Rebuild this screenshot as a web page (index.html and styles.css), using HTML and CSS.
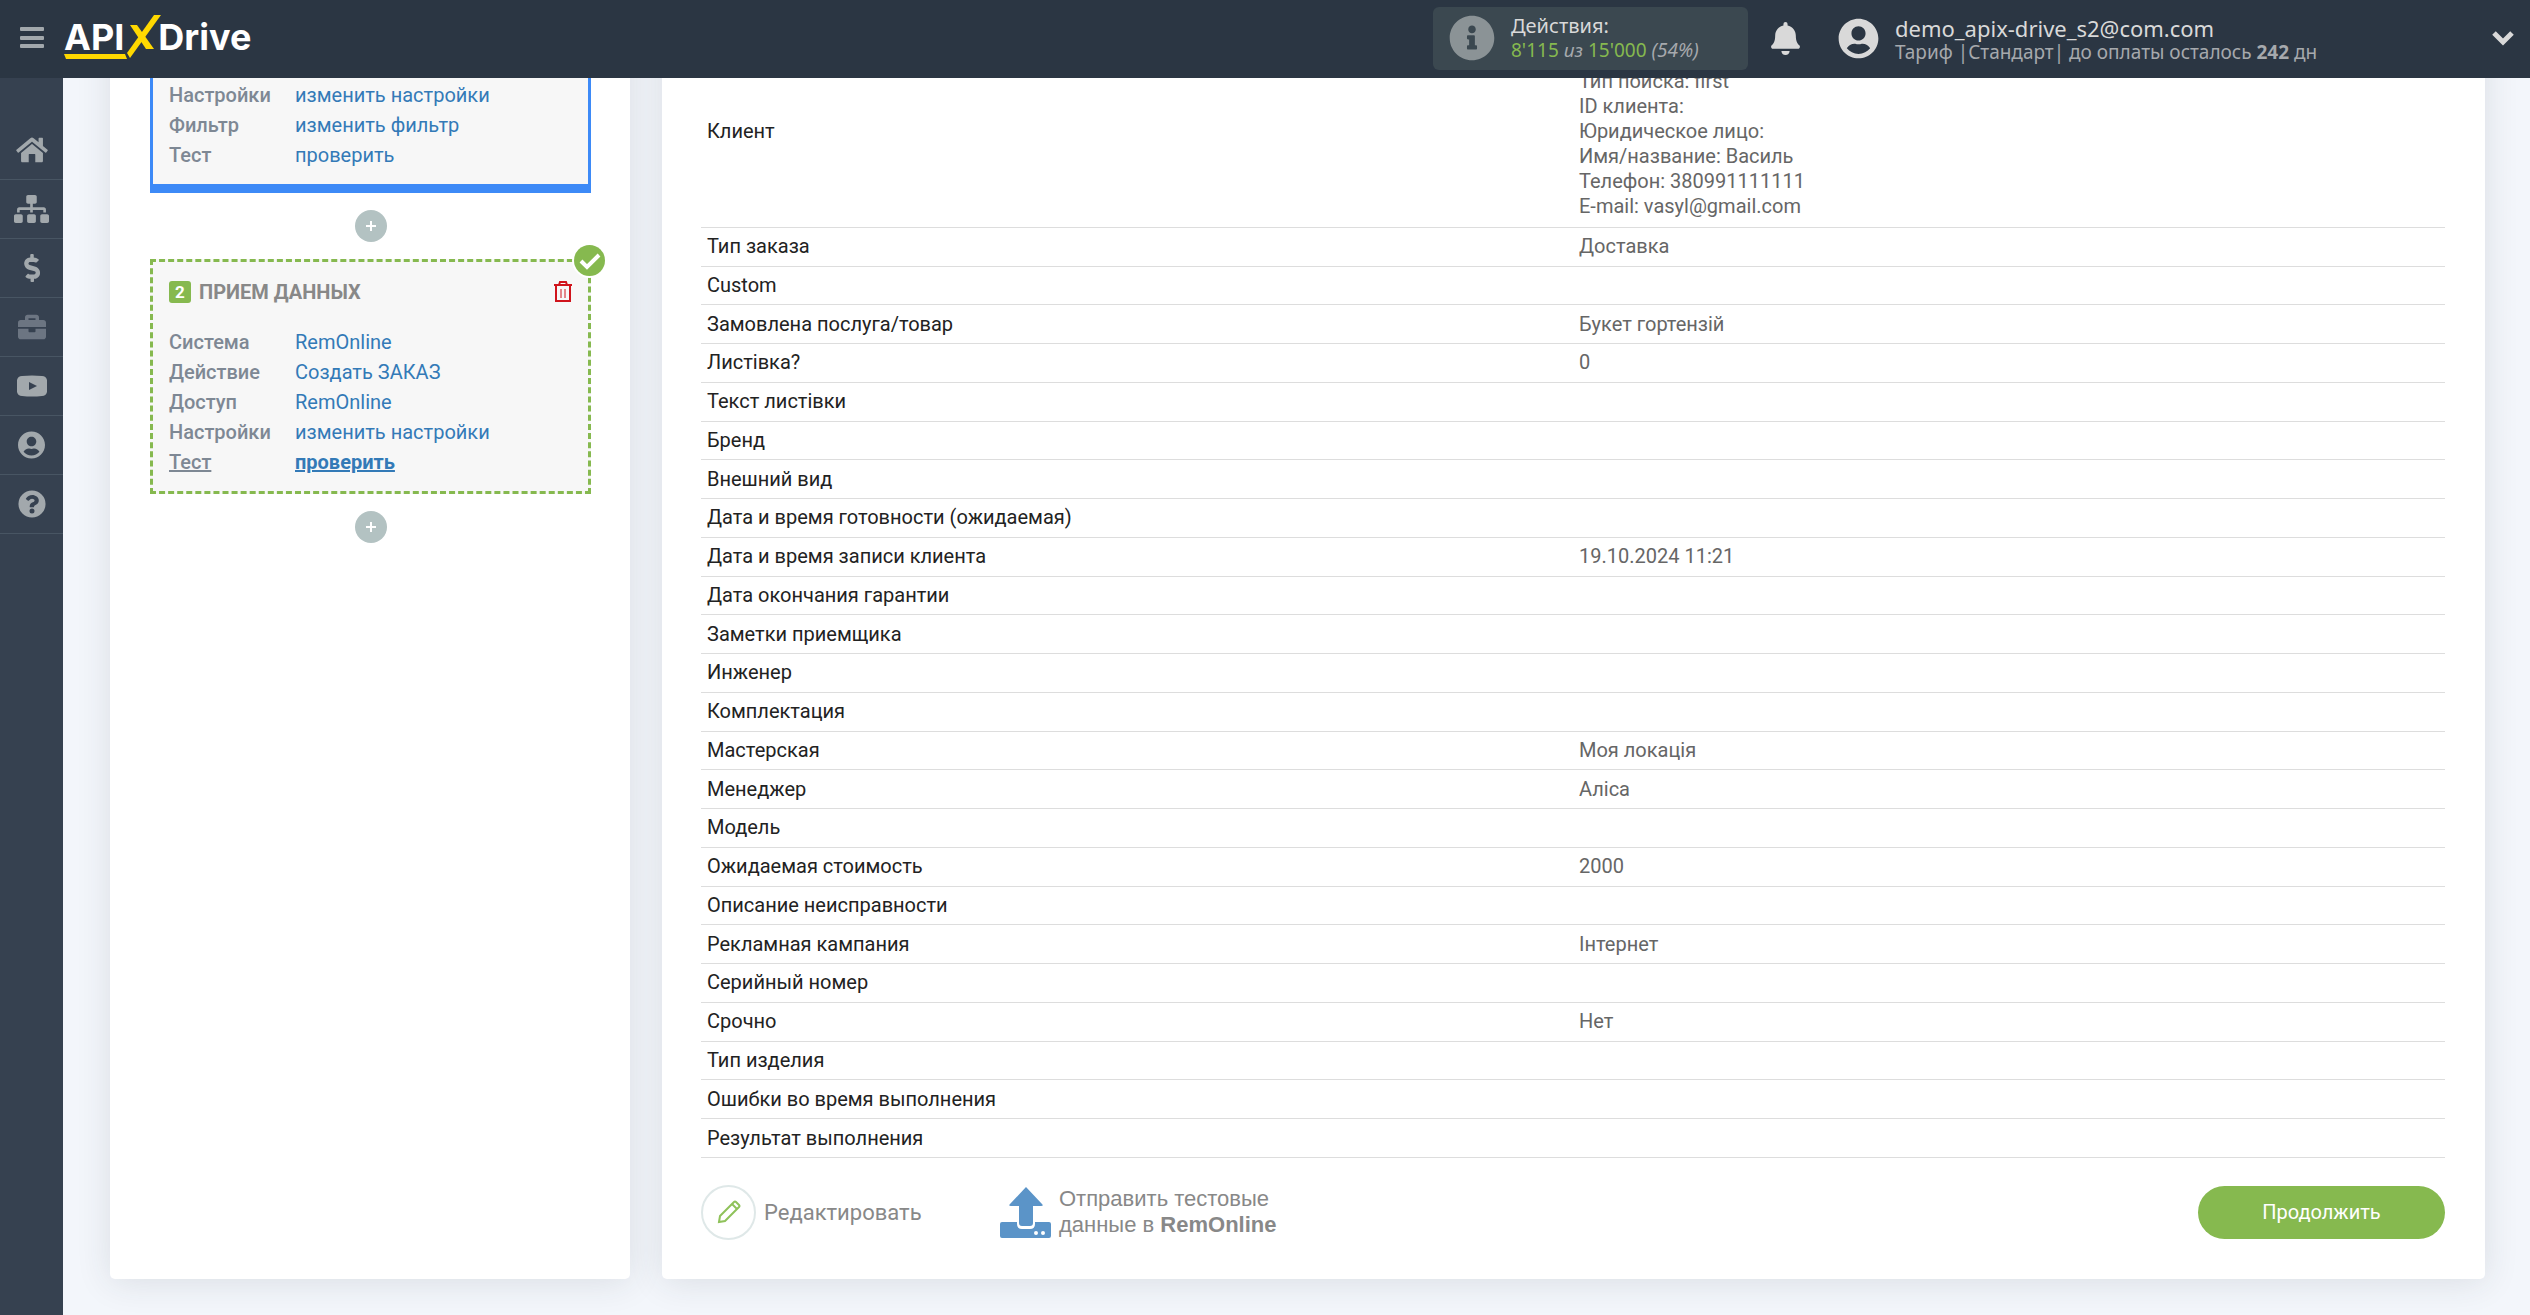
FILE: index.html
```
<!DOCTYPE html>
<html lang="ru">
<head>
<meta charset="utf-8">
<title>ApiX-Drive</title>
<link rel="stylesheet" href="styles.css">
</head>
<body>
<header class="topbar">
  <button class="icon-btn menu-btn" aria-label="Меню">
    <svg width="24" height="22" viewBox="0 0 24 22" fill="#a2a8ac"><rect width="24" height="4" rx="1"/><rect y="9" width="24" height="4" rx="1"/><rect y="17" width="24" height="4" rx="1"/></svg>
  </button>
  <a class="logo" href="#" aria-label="APIXDrive">
    <span class="logo-text">API</span>
    <svg class="logo-x" width="34" height="44" viewBox="0 0 34 44" fill="#ffd800"><path d="M27 0h7L3 43l-3-5z"/><path d="M3 10h7l17 24h-8z"/></svg>
    <span class="logo-text">Drive</span>
    <svg class="logo-line" width="64" height="5" viewBox="0 0 64 5"><path d="M0 0h61l2 5H2z" fill="#ffd800"/></svg>
  </a>
  <div class="usage">
    <svg width="46" height="46" viewBox="0 0 512 512" fill="#8b9396"><path d="M256 8C119 8 8 119 8 256s111 248 248 248 248-111 248-248S393 8 256 8zm0 110c23 0 42 19 42 42s-19 42-42 42-42-19-42-42 19-42 42-42zm56 254c0 7-5 12-12 12h-88c-7 0-12-5-12-12v-24c0-7 5-12 12-12h12v-64h-12c-7 0-12-5-12-12v-24c0-7 5-12 12-12h64c7 0 12 5 12 12v100h12c7 0 12 5 12 12z"/></svg>
    <div>
      <div class="usage-title">Действия:</div>
      <div class="usage-value"><span class="green">8'115</span> <i>из</i> <span class="green">15'000</span> <i>(54%)</i></div>
    </div>
  </div>
  <button class="icon-btn bell" aria-label="Уведомления">
    <svg width="29" height="33" viewBox="0 0 448 512" fill="#d9d9d9"><path d="M224 512c35 0 64-29 64-64H160c0 35 29 64 64 64zm215-150c-19-20-55-51-55-154 0-78-54-139-128-155V32a32 32 0 1 0-64 0v21C118 69 64 130 64 208c0 103-36 134-55 154-6 6-9 14-9 22 0 16 13 32 32 32h384c19 0 32-16 32-32 0-8-3-16-9-22z"/></svg>
  </button>
  <div class="account">
    <svg width="41" height="41" viewBox="0 0 496 512" fill="#d9d9d9"><path d="M248 8C111 8 0 119 0 256s111 248 248 248 248-111 248-248S385 8 248 8zm0 96c49 0 88 39 88 88s-39 88-88 88-88-39-88-88 39-88 88-88zm0 344c-59 0-111-27-146-69 19-35 55-59 98-59 2 0 5 0 7 1 13 4 27 7 41 7s28-3 41-7c2-1 5-1 7-1 43 0 79 24 98 59-35 42-87 69-146 69z"/></svg>
    <div class="account-text">
      <div class="account-name">demo_apix-drive_s2@com.com</div>
      <div class="account-plan">Тариф |Стандарт| до оплаты осталось <b>242</b> дн</div>
    </div>
  </div>
  <button class="icon-btn" aria-label="Ещё">
    <svg width="22" height="16" viewBox="0 0 22 16" fill="none" stroke="#d9d9d9" stroke-width="5"><path d="M2 3l9 9 9-9"/></svg>
  </button>
</header>

<div class="shell">
  <nav class="sidebar">
    <a href="#" aria-label="Главная"><svg width="32" height="28" viewBox="0 0 576 512"><path d="M488 313V456c0 13-11 24-24 24H348V336a8 8 0 0 0-8-8H236a8 8 0 0 0-8 8v144H112c-13 0-24-11-24-24V313c0-4 2-7 5-9l188-155c4-4 10-4 14 0l188 155c3 2 5 5 5 9zm84-61l-84-70V44a12 12 0 0 0-12-12h-56a12 12 0 0 0-12 12v72l-90-74a48 48 0 0 0-61 0L4 252a12 12 0 0 0-1 17l25 31a12 12 0 0 0 17 2l236-194c4-4 10-4 14 0l236 194a12 12 0 0 0 17-2l25-31a12 12 0 0 0-1-17z"/></svg></a>
    <a href="#" aria-label="Связи"><svg width="35" height="28" viewBox="0 0 640 512"><path d="M128 352H32c-18 0-32 14-32 32v96c0 18 14 32 32 32h96c18 0 32-14 32-32v-96c0-18-14-32-32-32zm-24-80h192v48h48v-48h192v48h48v-57c0-21-17-39-38-39H344v-64h40c18 0 32-14 32-32V32c0-18-14-32-32-32H256c-18 0-32 14-32 32v96c0 18 14 32 32 32h40v64H94c-21 0-38 18-38 39v57h48zm264 80h-96c-18 0-32 14-32 32v96c0 18 14 32 32 32h96c18 0 32-14 32-32v-96c0-18-14-32-32-32zm240 0h-96c-18 0-32 14-32 32v96c0 18 14 32 32 32h96c18 0 32-14 32-32v-96c0-18-14-32-32-32z"/></svg></a>
    <a href="#" aria-label="Оплата"><svg width="18" height="28" viewBox="0 0 288 512"><path d="M209 233l-108-31c-12-4-21-16-21-29 0-16 13-29 30-29h66c12 0 24 4 34 10 6 4 14 3 20-2l34-34c7-7 6-18-2-24a138 138 0 0 0-86-30V16c0-9-7-16-16-16h-32c-9 0-16 7-16 16v48h-2C46 64-5 120 2 187c5 47 41 86 87 99l102 30c13 4 21 16 21 29 0 16-13 29-29 29h-66c-12 0-24-4-34-10-6-4-14-3-20 2l-34 34c-7 7-6 18 2 24 24 19 55 30 86 30v42c0 9 7 16 16 16h32c9 0 16-7 16-16v-42c46-1 90-28 105-72 21-61-14-131-77-149z"/></svg></a>
    <a href="#" class="muted" aria-label="Проекты"><svg width="28" height="28" viewBox="0 0 512 512"><path d="M320 336c0 9-7 16-16 16h-96c-9 0-16-7-16-16v-48H0v144c0 26 22 48 48 48h416c26 0 48-22 48-48V288H320zm144-208h-80V80c0-26-22-48-48-48H176c-26 0-48 22-48 48v48H48c-26 0-48 22-48 48v80h512v-80c0-26-22-48-48-48zm-144 0H192V96h128z"/></svg></a>
    <a href="#" aria-label="Видео"><svg width="30" height="22" viewBox="0 0 30 22"><path fill-rule="evenodd" d="M5 1Q15 0 25 1q4 0 5 4 1 6 0 12-1 4-5 4-10 1-20 0-4 0-5-4-1-6 0-12 1-4 5-4zm7 6v8l8-4z"/></svg></a>
    <a href="#" aria-label="Профиль"><svg width="27" height="28" viewBox="0 0 496 512"><path d="M248 8C111 8 0 119 0 256s111 248 248 248 248-111 248-248S385 8 248 8zm0 96c49 0 88 39 88 88s-39 88-88 88-88-39-88-88 39-88 88-88zm0 344c-59 0-111-27-146-69 19-35 55-59 98-59 2 0 5 0 7 1 13 4 27 7 41 7s28-3 41-7c2-1 5-1 7-1 43 0 79 24 98 59-35 42-87 69-146 69z"/></svg></a>
    <a href="#" aria-label="Помощь"><svg width="28" height="28" viewBox="0 0 512 512"><path d="M504 256a248 248 0 1 1-496 0 248 248 0 0 1 496 0zM262 90c-54 0-89 23-116 64-4 5-2 12 2 16l35 26c5 4 13 3 17-2 18-23 30-36 57-36 21 0 46 13 46 33 0 15-12 23-33 34-24 13-56 30-56 72v7c0 7 5 12 12 12h56c7 0 12-5 12-12v-4c0-29 86-30 86-110 0-59-62-100-118-100zm-6 248a46 46 0 1 0 0 92 46 46 0 0 0 0-92z"/></svg></a>
  </nav>

  <main class="content">
    <section class="card steps">
      <div class="step source">
        <dl class="step-rows">
          <dt>Настройки</dt><dd><a href="#">изменить настройки</a></dd>
          <dt>Фильтр</dt><dd><a href="#">изменить фильтр</a></dd>
          <dt>Тест</dt><dd><a href="#">проверить</a></dd>
        </dl>
      </div>
      <button class="add" aria-label="Добавить шаг"><svg width="10" height="10" viewBox="0 0 10 10" stroke="#fff" stroke-width="2"><path d="M5 0v10M0 5h10"/></svg></button>
      <div class="step target">
        <svg class="done" width="35" height="35" viewBox="0 0 35 35"><circle cx="17.500" cy="17.500" r="17.500" fill="#fff"/><circle cx="17.500" cy="17.500" r="15.500" fill="#86b94f"/><path d="M9 18l6 6 12-12" fill="none" stroke="#fff" stroke-width="4"/></svg>
        <div class="step-head">
          <span class="num">2</span>
          <h2>ПРИЕМ ДАННЫХ</h2>
          <button class="icon-btn trash" aria-label="Удалить"><svg width="18" height="22" viewBox="0 0 18 22" fill="none" stroke="#d0141c" stroke-width="2"><path d="M0 4h18M2 4v16h14V4M5 4l1-3h6l1 3"/><path d="M7 8v9M11 8v9" stroke-width="1"/></svg></button>
        </div>
        <dl class="step-rows">
          <dt>Система</dt><dd><a href="#">RemOnline</a></dd>
          <dt>Действие</dt><dd><a href="#">Создать ЗАКАЗ</a></dd>
          <dt>Доступ</dt><dd><a href="#">RemOnline</a></dd>
          <dt>Настройки</dt><dd><a href="#">изменить настройки</a></dd>
          <dt class="current">Тест</dt><dd class="current"><a href="#">проверить</a></dd>
        </dl>
      </div>
      <button class="add" aria-label="Добавить шаг"><svg width="10" height="10" viewBox="0 0 10 10" stroke="#fff" stroke-width="2"><path d="M5 0v10M0 5h10"/></svg></button>
    </section>

    <section class="card result">
      <table class="data">
        <tr><th scope="row">Клиент</th><td><br>Тип поиска: first<br>ID клиента:<br>Юридическое лицо:<br>Имя/название: Василь<br>Телефон: 380991111111<br>E-mail: vasyl@gmail.com</td></tr>
        <tr><th scope="row">Тип заказа</th><td>Доставка</td></tr>
        <tr><th scope="row">Custom</th><td></td></tr>
        <tr><th scope="row">Замовлена послуга/товар</th><td>Букет гортензій</td></tr>
        <tr><th scope="row">Листівка?</th><td>0</td></tr>
        <tr><th scope="row">Текст листівки</th><td></td></tr>
        <tr><th scope="row">Бренд</th><td></td></tr>
        <tr><th scope="row">Внешний вид</th><td></td></tr>
        <tr><th scope="row">Дата и время готовности (ожидаемая)</th><td></td></tr>
        <tr><th scope="row">Дата и время записи клиента</th><td>19.10.2024 11:21</td></tr>
        <tr><th scope="row">Дата окончания гарантии</th><td></td></tr>
        <tr><th scope="row">Заметки приемщика</th><td></td></tr>
        <tr><th scope="row">Инженер</th><td></td></tr>
        <tr><th scope="row">Комплектация</th><td></td></tr>
        <tr><th scope="row">Мастерская</th><td>Моя локація</td></tr>
        <tr><th scope="row">Менеджер</th><td>Аліса</td></tr>
        <tr><th scope="row">Модель</th><td></td></tr>
        <tr><th scope="row">Ожидаемая стоимость</th><td>2000</td></tr>
        <tr><th scope="row">Описание неисправности</th><td></td></tr>
        <tr><th scope="row">Рекламная кампания</th><td>Інтернет</td></tr>
        <tr><th scope="row">Серийный номер</th><td></td></tr>
        <tr><th scope="row">Срочно</th><td>Нет</td></tr>
        <tr><th scope="row">Тип изделия</th><td></td></tr>
        <tr><th scope="row">Ошибки во время выполнения</th><td></td></tr>
        <tr><th scope="row">Результат выполнения</th><td></td></tr>
      </table>
      <div class="actions">
        <button class="text-btn edit">
          <span class="ring"><svg width="24" height="24" viewBox="0 0 24 24" fill="none" stroke="#8fc25a" stroke-width="2"><path d="M2 22l1-6L17 2q1-1 2 0l3 3q1 1 0 2L8 21z"/><path d="M15 4l5 5"/></svg></span>
          <span>Редактировать</span>
        </button>
        <button class="text-btn send">
          <svg width="51" height="51" viewBox="0 0 51 51" fill="#5b94c8"><path d="M26 0l16 17q2 2-1 2h-8v17q0 3-3 3h-8q-3 0-3-3V19h-8q-3 0-1-2z"/><path fill-rule="evenodd" d="M2 35h15v2q0 5 5 5h8q5 0 5-5v-2h14q2 0 2 2v12q0 2-2 2H2q-2 0-2-2V37q0-2 2-2zm34 9a2 2 0 1 0 0 4 2 2 0 0 0 0-4zm7 0a2 2 0 1 0 0 4 2 2 0 0 0 0-4z"/></svg>
          <span>Отправить тестовые<br>данные в <b>RemOnline</b></span>
        </button>
        <button class="primary">Продолжить</button>
      </div>
    </section>
  </main>
</div>
</body>
</html>
```
FILE: styles.css
```
* { box-sizing: border-box; }

body {
  margin: 0;
  background: #f3f6fb;
  font: 20px/25px Roboto, "Noto Sans", sans-serif;
  color: #666;
}

a { color: #337ab7; text-decoration: none; }
svg { display: block; flex: none; }
button { font: inherit; cursor: pointer; }

.icon-btn { border: 0; background: none; padding: 0; }

/* Top bar */
.topbar {
  position: fixed;
  inset: 0 0 auto 0;
  z-index: 10;
  height: 78px;
  display: flex;
  align-items: center;
  padding: 0 16px 2px 20px;
  background: #2b3643;
  color: #d9d9d9;
  font-family: "Noto Sans", "Open Sans", sans-serif;
}
.menu-btn { margin-right: 20px; }

.logo {
  position: relative;
  display: flex;
  align-items: center;
  height: 44px;
  margin-bottom: 2px;
  color: #fff;
}
.logo-text { font: 700 36px/42px Inter, sans-serif; }
.logo-x { margin: 0 -3px 0 3px; }
.logo-line { position: absolute; left: 0; bottom: 0; }

.usage {
  display: flex;
  align-items: center;
  gap: 16px;
  width: 315px;
  height: 63px;
  padding: 0 16px;
  margin-left: auto;
  border-radius: 6px;
  background: #3b4850;
}
.usage-title { font-size: 20px; line-height: 24px; }
.usage-value { font-size: 19px; line-height: 24px; color: #a6a9ad; }
.green { color: #86b94f; }

.bell { margin: 0 38px 0 23px; }
.account { display: flex; align-items: center; gap: 16px; flex: 0 0 654px; }
.account-text { padding-top: 4px; }
.account-name { font-size: 22px; line-height: 24px; }
.account-plan { font-size: 19px; line-height: 24px; color: #a6a9ad; }

/* Page */
.shell { display: flex; min-height: 100vh; }

.sidebar {
  flex: none;
  width: 63px;
  padding-top: 121px;
  background: #364150;
}
.sidebar a {
  display: flex;
  align-items: center;
  justify-content: center;
  height: 59px;
  border-bottom: 1px solid #485563;
  fill: #a2a8ac;
}
.sidebar a.muted { fill: #6c7582; }

.content {
  flex: 1;
  display: flex;
  gap: 32px;
  padding: 0 45px 36px 47px;
}
.card {
  background: #fff;
  border-radius: 5px;
  box-shadow: 0 3px 35px rgba(40, 50, 60, 0.12);
}

/* Steps */
.steps {
  flex: 0 0 520px;
  display: flex;
  flex-direction: column;
  align-items: center;
  padding: 47px 39px 0 40px;
}
.step { position: relative; width: 100%; background: #f7f7f7; }
.source {
  border: 3px solid #3d8af7;
  border-bottom-width: 9px;
  padding: 30px 16px 14px;
}
.target {
  border: 3px dashed #86b94f;
  padding: 19px 16px 14px;
}
.step-rows {
  display: grid;
  grid-template-columns: 126px 1fr;
  margin: 0;
  line-height: 30px;
}
.step-rows dt { font-weight: 500; color: #7e8894; }
.step-rows dd { margin: 0; }
.step-rows .current { text-decoration: underline; color: #7e8894; }
.step-rows .current a { text-decoration: underline; color: #337ab7; }
.step-rows dd.current { font-weight: 700; text-decoration: none; }

.step-head {
  display: flex;
  align-items: center;
  gap: 8px;
  margin-bottom: 24px;
}
.step-head h2 { margin: 0; font-size: 20px; line-height: 22px; font-weight: 700; color: #888; }
.num {
  width: 22px;
  border-radius: 3px;
  background: #86b94f;
  color: #fff;
  font-size: 17px;
  line-height: 22px;
  font-weight: 700;
  text-align: center;
}
.trash { margin-left: auto; }
.done { position: absolute; top: -19px; right: -19px; }

.add {
  display: flex;
  align-items: center;
  justify-content: center;
  width: 32px;
  height: 32px;
  margin: 17px 0;
  padding: 0;
  border: 0;
  border-radius: 50%;
  background: #b3c2c2;
}

/* Result table */
.result {
  flex: 1;
  display: flex;
  flex-direction: column;
  padding: 36px 40px 0 39px;
}
.data {
  flex: 1;
  width: 100%;
  border-collapse: collapse;
}
.data th, .data td {
  width: 50%;
  padding: 6px;
  border-bottom: 1px solid #ddd;
  text-align: left;
  vertical-align: middle;
}
.data th { font-weight: 400; color: #222; }

.actions {
  display: flex;
  align-items: center;
  height: 121px;
  padding-bottom: 13px;
}
.text-btn {
  display: flex;
  align-items: center;
  gap: 8px;
  padding: 0;
  border: 0;
  background: none;
  color: #888;
  font-size: 22px;
  text-align: left;
}
.edit { min-width: 299px; }
.send { font-family: "Liberation Sans", Arial, sans-serif; line-height: 26px; }
.ring {
  display: flex;
  align-items: center;
  justify-content: center;
  width: 55px;
  height: 55px;
  border: 2px solid #dfe8e8;
  border-radius: 50%;
}
.primary {
  width: 247px;
  height: 53px;
  margin-left: auto;
  border: 0;
  border-radius: 27px;
  background: #86b94f;
  color: #fff;
}
```
